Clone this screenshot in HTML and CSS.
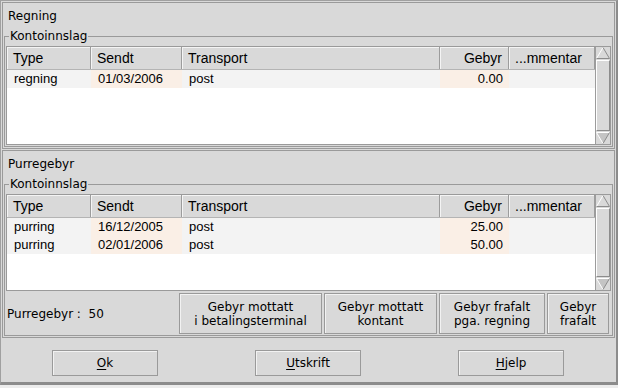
FILE: index.html
```html
<!DOCTYPE html>
<html lang="no">
<head>
<meta charset="utf-8">
<title>Purregebyr</title>
<link rel="stylesheet" href="styles.css">
</head>
<body>
<div class="win">

	<section class="panel">
		<div class="title">Regning</div>
		<fieldset class="group">
			<legend>Kontoinnslag</legend>
			<div class="tbl tbl-1">
				<div class="list">
					<div class="row head">
						<div>Type</div><div>Sendt</div><div>Transport</div><div class="num">Gebyr</div><div>...mmentar</div>
					</div>
					<div class="row">
						<div>regning</div><div class="hl">01/03/2006</div><div>post</div><div class="num hl">0.00</div><div></div>
					</div>
				</div>
				<div class="sb">
					<svg class="arr" width="14" height="12" viewBox="0 0 14 12"><polygon points="7,0.5 13.5,11.5 0.5,11.5" fill="#d9d9d9"/><path d="M0.5 11.5 L7 0.5" stroke="#fff" fill="none"/><path d="M7 0.5 L13.5 11.5 L0.5 11.5" stroke="#8c8c8c" fill="none"/></svg>
					<div class="thumb"></div>
					<svg class="arr" width="14" height="12" viewBox="0 0 14 12"><polygon points="0.5,0.5 13.5,0.5 7,11.5" fill="#c4c4c4"/><path d="M7 11.5 L0.5 0.5 L13.5 0.5" stroke="#fff" fill="none"/><path d="M13.5 0.5 L7 11.5" stroke="#8c8c8c" fill="none"/></svg>
				</div>
			</div>
		</fieldset>
	</section>

	<section class="panel">
		<div class="title">Purregebyr</div>
		<fieldset class="group">
			<legend>Kontoinnslag</legend>
			<div class="tbl tbl-2">
				<div class="list">
					<div class="row head">
						<div>Type</div><div>Sendt</div><div>Transport</div><div class="num">Gebyr</div><div>...mmentar</div>
					</div>
					<div class="row">
						<div>purring</div><div class="hl">16/12/2005</div><div>post</div><div class="num hl">25.00</div><div></div>
					</div>
					<div class="row">
						<div>purring</div><div class="hl">02/01/2006</div><div>post</div><div class="num hl">50.00</div><div></div>
					</div>
				</div>
				<div class="sb">
					<svg class="arr" width="14" height="12" viewBox="0 0 14 12"><polygon points="7,0.5 13.5,11.5 0.5,11.5" fill="#d9d9d9"/><path d="M0.5 11.5 L7 0.5" stroke="#fff" fill="none"/><path d="M7 0.5 L13.5 11.5 L0.5 11.5" stroke="#8c8c8c" fill="none"/></svg>
					<div class="thumb"></div>
					<svg class="arr" width="14" height="12" viewBox="0 0 14 12"><polygon points="0.5,0.5 13.5,0.5 7,11.5" fill="#c4c4c4"/><path d="M7 11.5 L0.5 0.5 L13.5 0.5" stroke="#fff" fill="none"/><path d="M13.5 0.5 L7 11.5" stroke="#8c8c8c" fill="none"/></svg>
				</div>
			</div>
			<div class="actions">
				<span class="sum">Purregebyr :&nbsp; 50</span>
				<button class="btn w1">Gebyr mottatt<br>i betalingsterminal</button>
				<button class="btn w2">Gebyr mottatt<br>kontant</button>
				<button class="btn w3">Gebyr frafalt<br>pga. regning</button>
				<button class="btn w4">Gebyr<br>frafalt</button>
			</div>
		</fieldset>
	</section>

	<div class="bar">
		<button class="btn big"><u>O</u>k</button>
		<button class="btn big"><u>U</u>tskrift</button>
		<button class="btn big"><u>H</u>jelp</button>
	</div>

</div>
</body>
</html>
```

FILE: styles.css
```css
html, body {
	margin: 0;
	padding: 0;
	background: #ececec;
}

body {
	font-family: "DejaVu Sans", sans-serif;
	font-size: 12px;
	color: #000;
}

.win {
	width: 618px;
	height: 385px;
	box-sizing: border-box;
	background: #d9d9d9;
	border-top: 1px solid #a0a0a0;
	border-left: 1px solid #a0a0a0;
	border-right: 2px solid #8c8c8c;
	border-bottom: 3px solid #8c8c8c;
	padding: 1px 1px 0 1px;
	display: flex;
	flex-direction: column;
}

.panel {
	border: 1px solid #9a9a9a;
	padding: 0 1px 1px 1px;
	margin-bottom: 1px;
}

.title {
	height: 27px;
	line-height: 27px;
	padding-left: 4px;
}

.group {
	margin: 0;
	padding: 3px 1px 1px 1px;
	border: 1px solid #9a9a9a;
	min-inline-size: 0;
}

.group legend {
	margin-left: 3px;
	padding: 0 1px;
	line-height: 13px;
}

.tbl {
	display: flex;
	border: 1px solid #9a9a9a;
	background: #fff;
}

.tbl-1 {
	height: 97px;
}

.tbl-2 {
	height: 95px;
}

.list {
	width: 588px;
	font-family: "Liberation Sans", Arial, sans-serif;
	font-size: 13px;
}

.row {
	display: grid;
	grid-template-columns: 84px 91px 258px 69px 86px;
	height: 18px;
	line-height: 18px;
	background: #f3f3f3;
}

.row > div {
	padding: 0 6px 0 7px;
	white-space: nowrap;
	overflow: hidden;
}

.row .num {
	text-align: right;
}

.row .hl {
	background: #faefe6;
}

.row.head {
	height: 22px;
	line-height: 22px;
	font-size: 14px;
	background: #d9d9d9;
	border-bottom: 1px solid #b4b4b4;
}

.row.head > div {
	padding-left: 6px;
	border-right: 1px solid #9c9c9c;
	box-shadow: inset 1px 1px 0 #f4f4f4;
}

.sb {
	width: 14px;
	border-left: 1px solid #9c9c9c;
	background: #d9d9d9;
	display: flex;
	flex-direction: column;
}

.arr {
	display: block;
}

.thumb {
	flex: 1;
	margin: 1px 0;
	border: 1px solid;
	border-color: #fff #8c8c8c #8c8c8c #fff;
}

.actions {
	display: flex;
	align-items: center;
	gap: 2px;
	margin-top: 2px;
	padding-right: 2px;
}

.sum {
	flex: 1;
	padding-left: 1px;
}

.btn {
	font-family: "DejaVu Sans", sans-serif;
	font-size: 12px;
	color: #000;
	background: #d9d9d9;
	border: 1px solid #9a9a9a;
	box-shadow: inset 1px 1px 0 #f2f2f2;
	padding: 0;
	margin: 0;
	line-height: 14px;
}

.actions .btn {
	height: 41px;
}

.w1 { width: 143px; }
.w2 { width: 113px; }
.w3 { width: 106px; }
.w4 { width: 62px; }

.bar {
	flex: 1;
	display: flex;
	justify-content: space-between;
	align-items: flex-start;
	padding: 11px 51px 0 50px;
}

.big {
	width: 106px;
	height: 26px;
}

.big u {
	text-decoration-thickness: 1px;
	text-underline-offset: 2px;
}
```
